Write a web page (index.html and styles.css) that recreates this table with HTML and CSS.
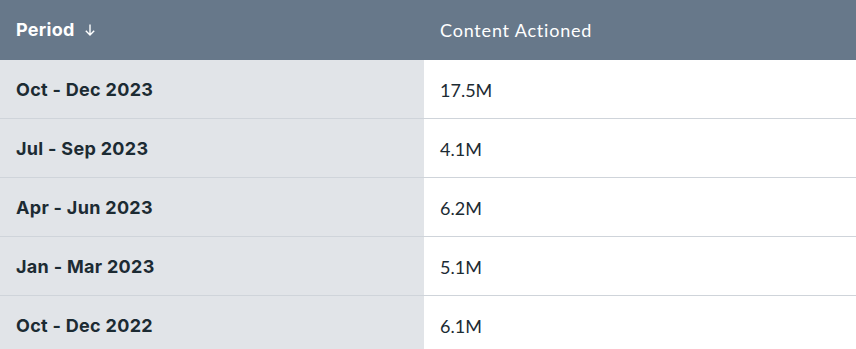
FILE: index.html
```html
<!DOCTYPE html>
<html>
<head>
<meta charset="utf-8">
<link rel="stylesheet" href="styles.css">
</head>
<body>
<table class="data-table">
  <thead>
    <tr>
      <th class="col-period">Period <span class="sort-icon"><svg width="12" height="14" viewBox="0 0 12 14"><path d="M6 1.5V12M1.8 7.8L6 12l4.2-4.2" fill="none" stroke="#fff" stroke-width="1.4"/></svg></span></th>
      <th class="col-value">Content Actioned</th>
    </tr>
  </thead>
  <tbody>
    <tr><td class="col-period">Oct - Dec 2023</td><td class="col-value">17.5M</td></tr>
    <tr><td class="col-period">Jul - Sep 2023</td><td class="col-value">4.1M</td></tr>
    <tr><td class="col-period">Apr - Jun 2023</td><td class="col-value">6.2M</td></tr>
    <tr><td class="col-period">Jan - Mar 2023</td><td class="col-value">5.1M</td></tr>
    <tr><td class="col-period">Oct - Dec 2022</td><td class="col-value">6.1M</td></tr>
  </tbody>
</table>
</body>
</html>
```

FILE: styles.css
```css
html, body {
  margin: 0;
  padding: 0;
  background: #ffffff;
}
.data-table {
  width: 856px;
  border-collapse: collapse;
  table-layout: fixed;
  font-family: "Inter", "Liberation Sans", sans-serif;
}
.data-table th {
  height: 60px;
  padding: 0 16px;
  background: #67788a;
  color: #ffffff;
  text-align: left;
  font-size: 18px;
  box-sizing: border-box;
}
.data-table th.col-period {
  width: 424px;
  font-weight: 700;
  letter-spacing: 0.3px;
}
.data-table th.col-value {
  font-weight: 400;
  font-family: "Lato", "Liberation Sans", sans-serif;
  font-size: 18px;
  letter-spacing: 0.8px;
}
.sort-icon {
  display: inline-block;
  margin-left: 5px;
  vertical-align: -1px;
}
.data-table td {
  height: 57px;
  padding: 1px 16px 0;
  border-bottom: 1px solid #cfd4da;
  font-size: 18px;
  color: #1c2b33;
}
.data-table td.col-period {
  background: #e1e4e8;
  font-weight: 700;
  letter-spacing: 0.3px;
}
.data-table td.col-value {
  background: #ffffff;
  font-family: "Lato", "Liberation Sans", sans-serif;
  font-size: 18px;
}
```
